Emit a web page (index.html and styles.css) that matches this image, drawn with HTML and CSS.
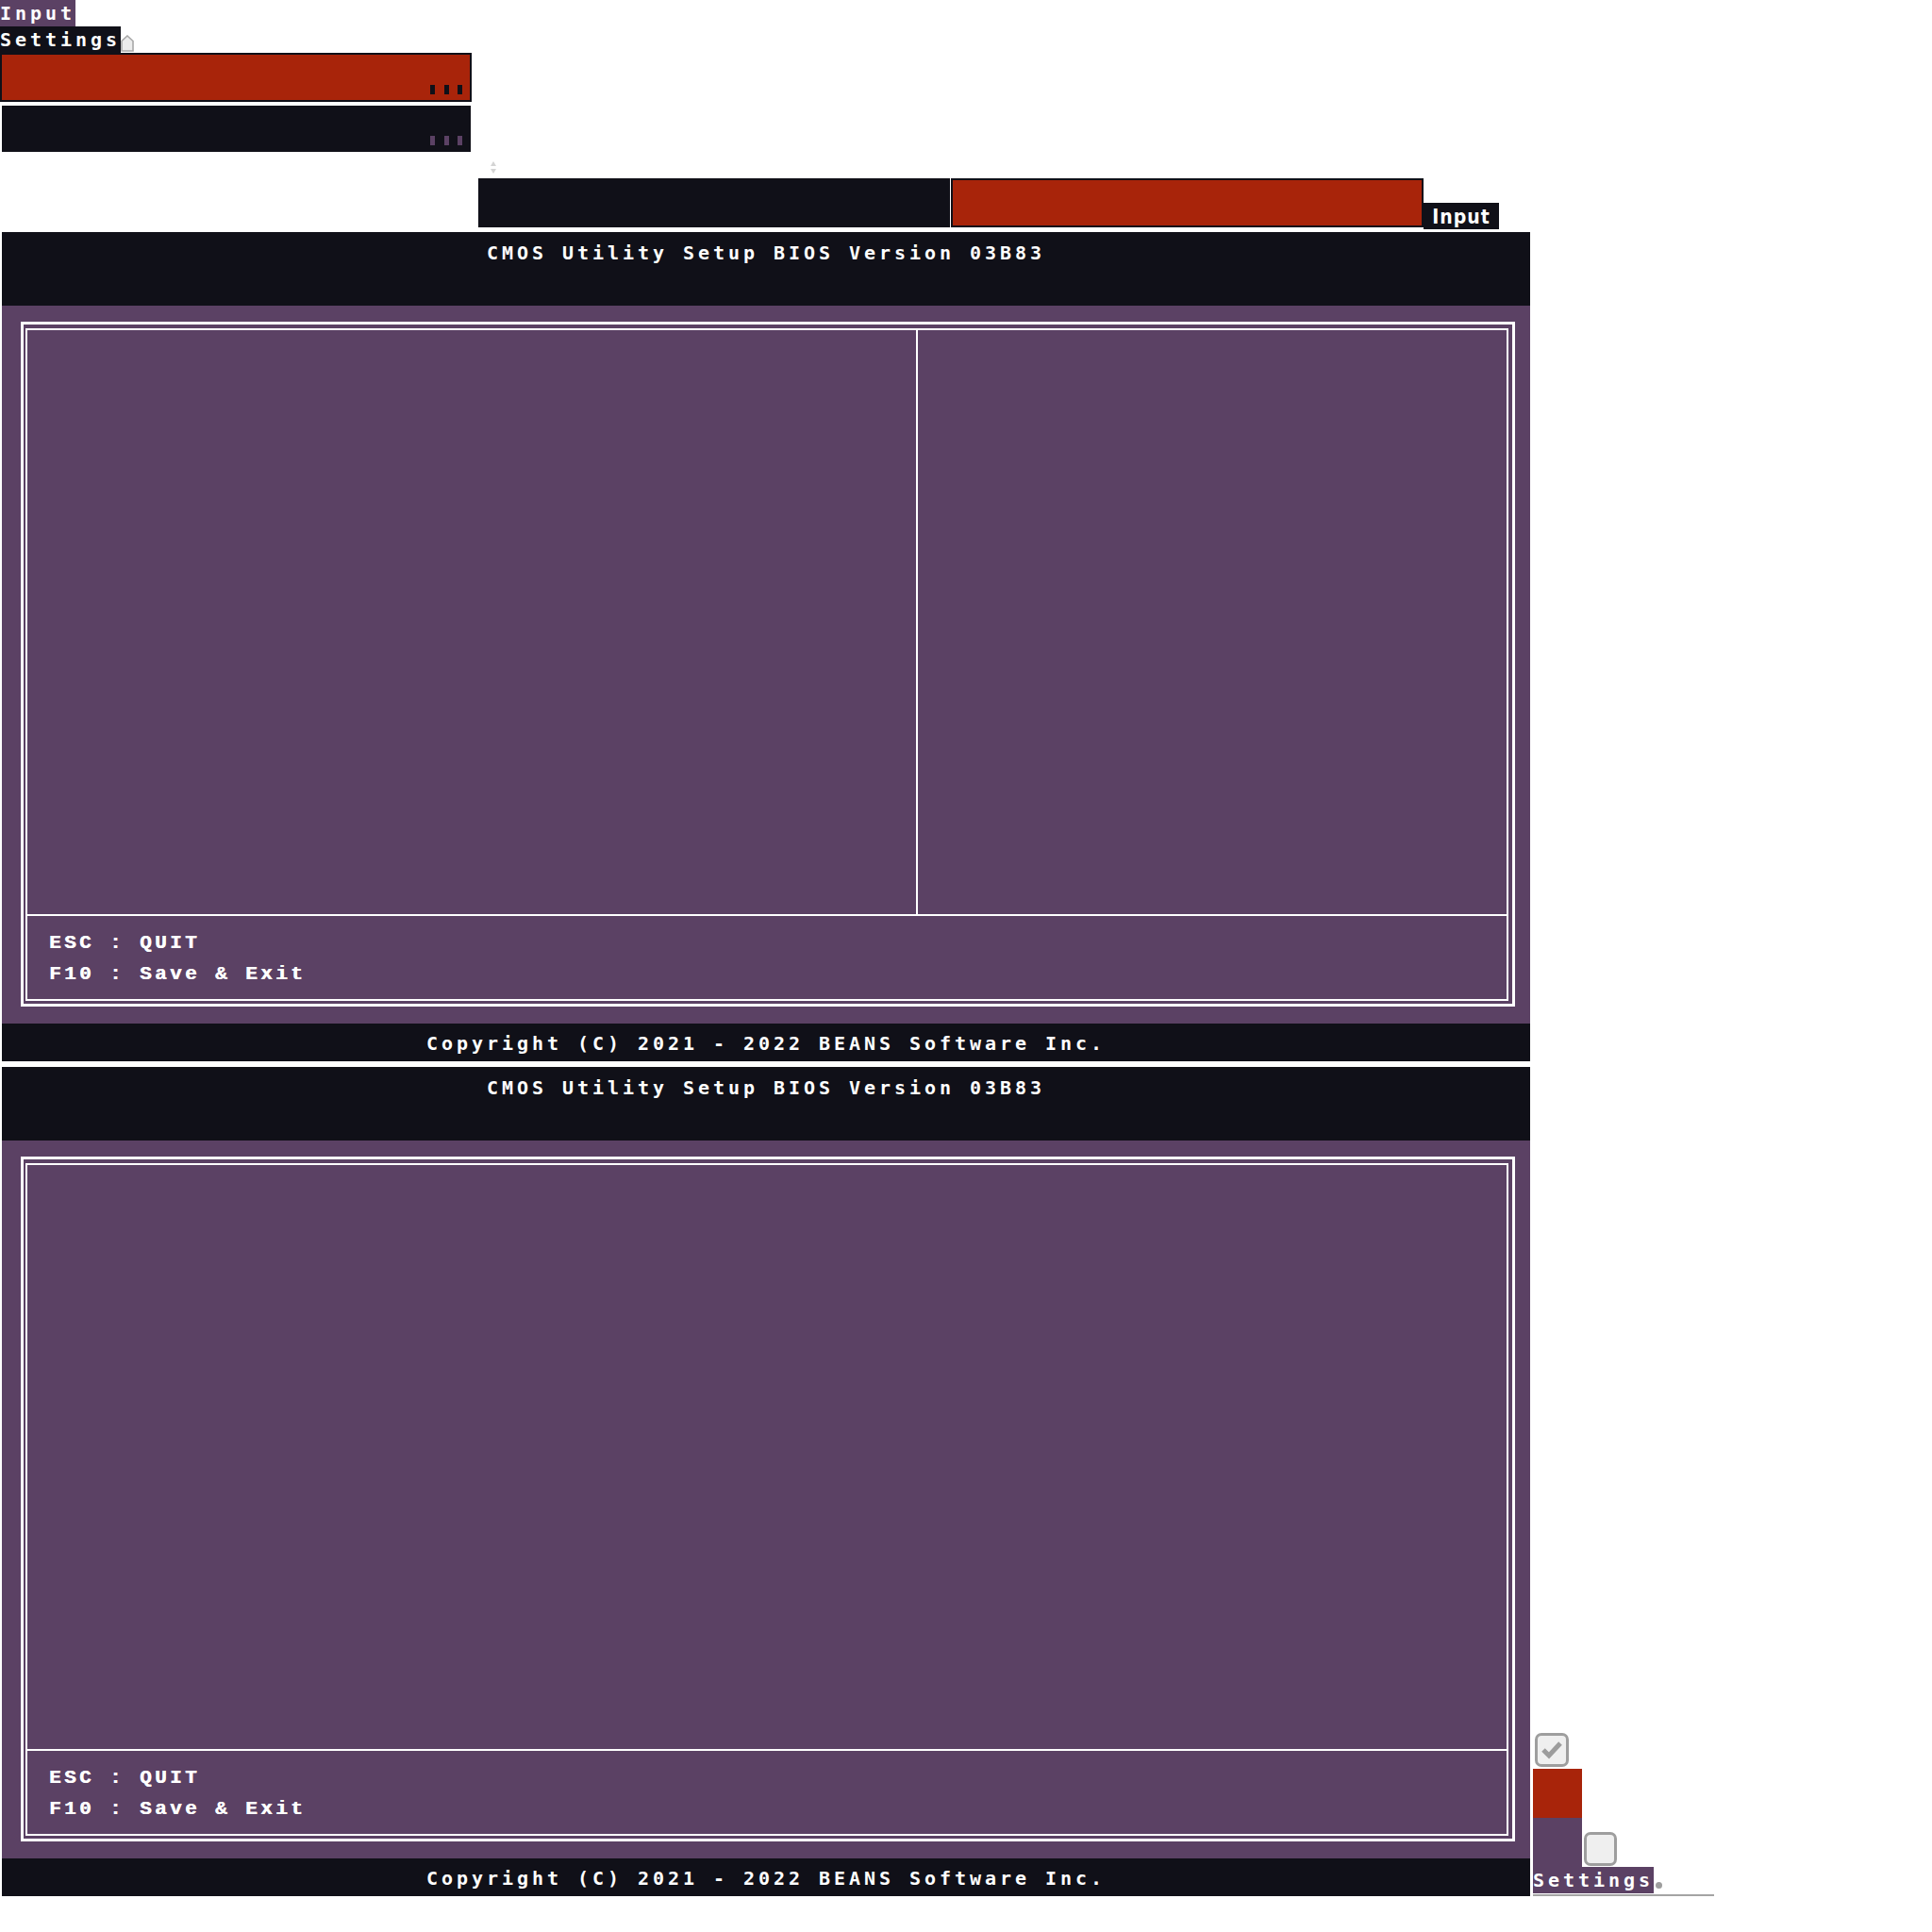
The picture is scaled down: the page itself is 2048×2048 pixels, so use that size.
FILE: index.html
```html
<!DOCTYPE html>
<html lang="en">
<head>
<meta charset="utf-8">
<title>CMOS Utility Setup</title>
<link rel="stylesheet" href="styles.css">
</head>
<body>
<div class="top">
  <div class="label-line"><span class="tag tag-purple">Input</span></div>
  <div class="label-line"><span class="tag tag-dark">Settings</span><svg class="thumb" width="14" height="18" viewBox="0 0 14 18"><path d="M7 1 L13 6.5 L13 17 L1 17 L1 6.5 Z" fill="#ececec" stroke="#a8a8a8" stroke-width="1.6"/></svg></div>
  <div class="bar bar-red"><span class="grip"><i></i><i></i><i></i></span></div>
  <div class="bar bar-dark"><span class="grip grip-purple"><i></i><i></i><i></i></span></div>
  <div class="spin-line"><svg class="spin" width="8" height="14" viewBox="0 0 8 14"><path d="M4 0 L7 5 L1 5 Z M1 8 L7 8 L4 13 Z" fill="#d4d4d4"/></svg></div>
  <div class="box-row">
    <div class="box box-dark"></div>
    <div class="box box-red"></div>
    <span class="tag-narrow">Input</span>
  </div>
</div>

<section class="bios">
  <header class="bios-head"><h1 class="bios-title">CMOS Utility Setup BIOS Version 03B83</h1></header>
  <div class="bios-body">
    <div class="frame-outer">
      <div class="frame-inner">
        <div class="panes">
          <div class="pane pane-left"></div>
          <div class="pane pane-right"></div>
        </div>
        <div class="keys">
          <p>ESC : QUIT</p>
          <p>F10 : Save &amp; Exit</p>
        </div>
      </div>
    </div>
  </div>
  <footer class="bios-foot">Copyright (C) 2021 - 2022 BEANS Software Inc.</footer>
</section>

<div class="bottom-row">
  <section class="bios bios-second">
    <header class="bios-head"><h1 class="bios-title">CMOS Utility Setup BIOS Version 03B83</h1></header>
    <div class="bios-body">
      <div class="frame-outer">
        <div class="frame-inner">
          <div class="panes">
            <div class="pane pane-full"></div>
          </div>
          <div class="keys">
            <p>ESC : QUIT</p>
            <p>F10 : Save &amp; Exit</p>
          </div>
        </div>
      </div>
    </div>
    <footer class="bios-foot">Copyright (C) 2021 - 2022 BEANS Software Inc.</footer>
  </section>

  <div class="cluster">
    <span class="check check-on"><svg width="24" height="20" viewBox="0 0 24 20"><path d="M3 10 L9 16 L21 3" fill="none" stroke="#9c9c9c" stroke-width="5" stroke-linejoin="miter"/></svg></span>
    <div class="sq sq-red"></div>
    <div class="sq-row">
      <div class="sq sq-purple"></div>
      <span class="check"></span>
    </div>
    <div class="set-row"><span class="tag tag-purple">Settings</span><span class="dot"></span></div>
    <div class="rule"></div>
  </div>
</div>
</body>
</html>
```

FILE: styles.css
```css
* { box-sizing: border-box; }

body {
  margin: 0;
  background: #ffffff;
  font-family: "DejaVu Sans Mono", "Liberation Mono", monospace;
  color: #ffffff;
}

/* ---------- top widgets ---------- */
.top { width: 1622px; }

.label-line {
  display: flex;
  align-items: flex-start;
  height: 28px;
}

.tag {
  display: inline-block;
  height: 28px;
  line-height: 28px;
  font-family: "DejaVu Sans Mono", monospace;
  font-weight: bold;
  font-size: 20px;
  letter-spacing: 3.96px;
  color: #ffffff;
  white-space: nowrap;
}
.tag-purple { background: #5b4164; }
.tag-dark { background: #101018; }

.thumb { margin-top: 9px; }

.bar {
  display: flex;
  justify-content: flex-end;
  align-items: flex-end;
}
.bar-red {
  width: 500px;
  height: 52px;
  background: #a8240a;
  border: 2px solid #101018;
  padding: 0 8px 6px 0;
}
.bar-dark {
  width: 497px;
  height: 49px;
  margin: 4px 0 0 2px;
  background: #101018;
  padding: 0 9px 7px 0;
}

.grip { display: flex; gap: 9.5px; }
.grip i {
  display: block;
  width: 5px;
  height: 10px;
  background: #101018;
}
.grip-purple i { background: #5b4164; }

.spin-line { height: 28px; padding: 10px 0 0 519px; }
.spin { display: block; }

.box-row {
  display: flex;
  align-items: flex-start;
  padding-left: 507px;
  height: 57px;
}
.box { width: 500px; height: 52px; }
.box-dark { background: #101018; }
.box-red {
  margin-left: 1px;
  width: 501px;
  background: #a8240a;
  border: 2px solid #101018;
}
.tag-narrow {
  display: inline-block;
  width: 80px;
  height: 28px;
  margin-top: 26px;
  background: #101018;
  color: #ffffff;
  font-family: "DejaVu Sans Condensed", "DejaVu Sans", sans-serif;
  font-stretch: condensed;
  font-weight: bold;
  font-size: 21px;
  line-height: 30px;
  text-align: center;
  letter-spacing: 1px;
}

/* ---------- BIOS screen ---------- */
.bios {
  width: 1620px;
  margin-left: 2px;
  flex: none;
}

.bios-head {
  height: 78px;
  background: #101018;
  padding-top: 11px;
}
.bios-title {
  margin: 0;
  font-family: "DejaVu Sans Mono", monospace;
  font-weight: bold;
  font-size: 20px;
  line-height: 22px;
  letter-spacing: 3.96px;
  text-align: center;
  color: #ffffff;
}

.bios-body {
  background: #5b4164;
  padding: 17px 16px 18px 20px;
}

.frame-outer {
  border: 3px solid #ffffff;
  padding: 4px 4px 3px 2px;
}
.frame-inner {
  border: 2px solid #ffffff;
}

.panes {
  display: flex;
  height: 621px;
  border-bottom: 2px solid #ffffff;
}
.pane-left {
  flex: 0 0 944px;
  border-right: 2px solid #ffffff;
}
.pane-right { flex: 1; }
.pane-full { flex: 1; }

.keys {
  height: 88px;
  padding: 12px 0 10px 23px;
}
.keys p {
  margin: 0;
  font-family: "Liberation Mono", "Courier New", monospace;
  font-weight: bold;
  font-size: 21px;
  line-height: 33px;
  letter-spacing: 3.4px;
  color: #ffffff;
  text-shadow: 0.6px 0 0 #ffffff;
}

.bios-foot {
  height: 40px;
  background: #101018;
  padding-top: 10px;
  font-family: "DejaVu Sans Mono", monospace;
  font-weight: bold;
  font-size: 20px;
  line-height: 22px;
  letter-spacing: 3.96px;
  text-align: center;
  color: #ffffff;
}

.bios-second { margin-left: 0; }

/* ---------- bottom row ---------- */
.bottom-row {
  display: flex;
  align-items: flex-end;
  margin-top: 6px;
  padding-left: 2px;
}

.cluster {
  display: flex;
  flex-direction: column;
  align-items: flex-start;
  margin-left: 3px;
  margin-bottom: -1px;
}

.check {
  display: flex;
  align-items: center;
  justify-content: center;
  width: 36px;
  height: 36px;
  border: 3px solid #9e9e9e;
  border-radius: 7px;
  background: #efefef;
}
.check-on { margin: 0 0 2px 2px; }

.sq { width: 52px; height: 52px; }
.sq-red { background: #a8240a; }
.sq-purple { background: #5b4164; }

.sq-row {
  display: flex;
  align-items: flex-end;
}
.sq-row .check { margin: 0 0 1px 2px; width: 35px; }

.set-row {
  display: flex;
  align-items: flex-end;
}
.dot {
  width: 7px;
  height: 7px;
  border-radius: 50%;
  background: #9e9e9e;
  margin: 0 0 5px 2px;
}

.rule {
  width: 192px;
  height: 3px;
  margin-top: 1px;
  background: #a4a4a4;
}
```
